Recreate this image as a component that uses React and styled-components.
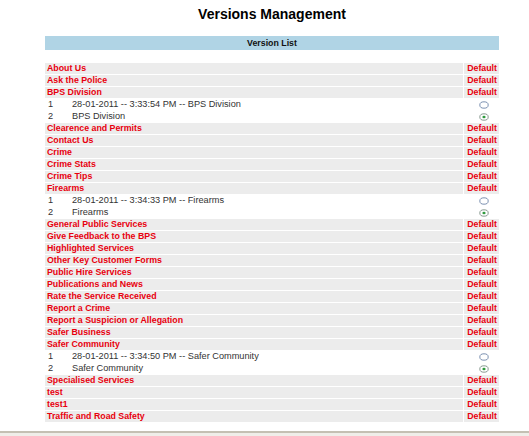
import React from 'react'
import styled, { createGlobalStyle } from 'styled-components'

const GlobalStyle = createGlobalStyle`
  body {
    margin: 0;
    background: #fff;
    font-family: "Liberation Sans", Arial, sans-serif;
  }
`

const sections = [
  { name: 'About Us' },
  { name: 'Ask the Police' },
  { name: 'BPS Division', versions: ['28-01-2011 -- 3:33:54 PM -- BPS Division', 'BPS Division'] },
  { name: 'Clearence and Permits' },
  { name: 'Contact Us' },
  { name: 'Crime' },
  { name: 'Crime Stats' },
  { name: 'Crime Tips' },
  { name: 'Firearms', versions: ['28-01-2011 -- 3:34:33 PM -- Firearms', 'Firearms'] },
  { name: 'General Public Services' },
  { name: 'Give Feedback to the BPS' },
  { name: 'Highlighted Services' },
  { name: 'Other Key Customer Forms' },
  { name: 'Public Hire Services' },
  { name: 'Publications and News' },
  { name: 'Rate the Service Received' },
  { name: 'Report a Crime' },
  { name: 'Report a Suspicion or Allegation' },
  { name: 'Safer Business' },
  { name: 'Safer Community', versions: ['28-01-2011 -- 3:34:50 PM -- Safer Community', 'Safer Community'] },
  { name: 'Specialised Services' },
  { name: 'test' },
  { name: 'test1' },
  { name: 'Traffic and Road Safety' },
]

const Radio = ({ checked }) => (
  <svg width="10" height="8" viewBox="0 0 10 8">
    <ellipse cx="5" cy="4" rx="4.2" ry="3.2" fill="#fff" stroke={checked ? '#7d8f86' : '#6d84a8'} strokeWidth="0.9" />
    {checked && <ellipse cx="5" cy="4" rx="1.6" ry="1.3" fill="#2f9a3e" />}
  </svg>
)

const App = () => {
  return (
    <Page>
      <GlobalStyle />
      <Main>
        <Title>Versions Management</Title>
        <HeaderBar>Version List</HeaderBar>
        <List>
          {sections.map((s) => (
            <React.Fragment key={s.name}>
              <SectionRow>
                <NameCell>{s.name}</NameCell>
                <DefaultCell>Default</DefaultCell>
              </SectionRow>
              {s.versions &&
                s.versions.map((v, i) => (
                  <VersionRow key={v}>
                    <Num>{i + 1}</Num>
                    <VersionText>{v}</VersionText>
                    <RadioCell>
                      <Radio checked={i === s.versions.length - 1} />
                    </RadioCell>
                  </VersionRow>
                ))}
            </React.Fragment>
          ))}
        </List>
      </Main>
      <Footer />
    </Page>
  )
}

const Page = styled.div`
  display: flex;
  flex-direction: column;
  height: 436px;
  overflow: hidden;
`

const Main = styled.div`
  width: 454px;
  margin-left: 45px;
`

const Title = styled.h1`
  margin: 0;
  padding-top: 6px;
  font-size: 14px;
  line-height: 16px;
  font-weight: bold;
  text-align: center;
  color: #000;
`

const HeaderBar = styled.div`
  margin-top: 14px;
  height: 14px;
  line-height: 14px;
  background: #b0d4e5;
  text-align: center;
  font-size: 8.8px;
  font-weight: bold;
  color: #111;
`

const List = styled.div`
  margin-top: 13px;
  display: flex;
  flex-direction: column;
  gap: 1px;
`

const SectionRow = styled.div`
  display: flex;
  gap: 1px;
  height: 11px;
`

const Cell = styled.div`
  background: #ececec;
  color: #e8000e;
  font-size: 8.8px;
  font-weight: bold;
  line-height: 11px;
  white-space: nowrap;
`

const NameCell = styled(Cell)`
  flex: 1;
  padding-left: 2px;
`

const DefaultCell = styled(Cell)`
  width: 33px;
  padding-right: 2px;
  text-align: right;
`

const VersionRow = styled.div`
  display: grid;
  grid-template-columns: 27px 1fr 35px;
  height: 11px;
  align-items: center;
  font-size: 9.2px;
  color: #333;
  line-height: 11px;
`

const Num = styled.span`
  padding-left: 3px;
`

const VersionText = styled.span`
  white-space: nowrap;
`

const RadioCell = styled.span`
  display: flex;
  justify-content: center;
  padding-left: 5px;
`

const Footer = styled.div`
  margin-top: auto;
  height: 3px;
  border-top: 2px solid #c4c0b3;
  background: #efeee9;
`

export default App
